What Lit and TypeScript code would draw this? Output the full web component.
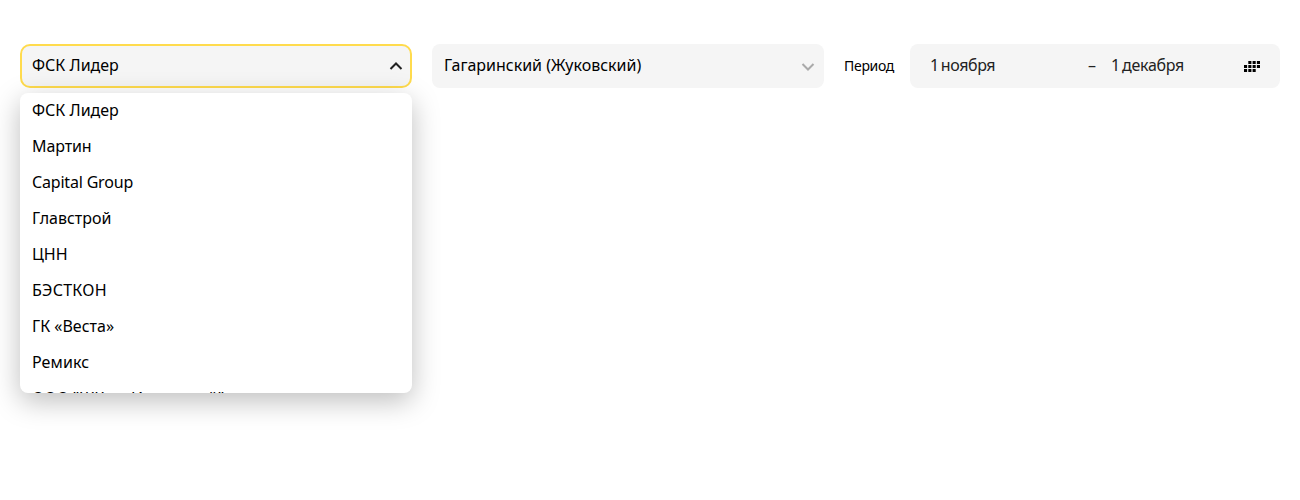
import { LitElement, html, css, svg } from "lit";
import { customElement } from "lit/decorators.js";

const developers = [
  { name: "ФСК Лидер", cls: "leader" },
  { name: "Мартин", cls: "martin" },
  { name: "Capital Group", cls: "capital" },
  { name: "Главстрой", cls: "glav" },
  { name: "ЦНН", cls: "cnn" },
  { name: "БЭСТКОН", cls: "best" },
  { name: "ГК «Веста»", cls: "vesta" },
  { name: "Ремикс", cls: "remix" },
  { name: "ООО \"ЖК на Ильинской\"", cls: "ooo" },
];

const calendarCells = [
  [4.3, 0], [8.6, 0], [12.9, 0],
  [0, 4], [4.3, 4], [8.6, 4], [12.9, 4],
  [0, 8], [4.3, 8], [8.6, 8],
];

@customElement("app-root")
export class AppRoot extends LitElement {
  static styles = css`
    :host {
      display: block;
      height: 500px;
      box-sizing: border-box;
      padding: 44px 20px 0;
      background: #fff;
      color: #000;
      font: 16px/20px "Noto Sans", sans-serif;
      overflow: hidden;
    }
    .filters { display: flex; align-items: center; }
    .select { position: relative; width: 392px; margin-right: 20px; }
    .button {
      display: flex;
      align-items: center;
      justify-content: space-between;
      box-sizing: border-box;
      height: 44px;
      padding: 0 8px 2px 12px;
      border-radius: 8px;
      background: #f5f5f5;
    }
    .open { padding: 0 6px 2px 10px; border: 2px solid #ffdb4d; border-radius: 10px; }
    .chevron { display: block; width: 16px; height: 16px; margin-top: 1px; fill: none; stroke: #222; stroke-width: 2; }
    .muted { stroke: #aaa; }
    .menu {
      position: absolute;
      top: 49px;
      left: 0;
      width: 392px;
      height: 300px;
      border-radius: 8px;
      background: #fff;
      box-shadow: 0 8px 28px rgba(0, 0, 0, 0.26);
      overflow: hidden;
    }
    .item { height: 36px; padding-left: 12px; line-height: 34px; white-space: nowrap; }
    .martin { letter-spacing: -0.1px; }
    .capital { letter-spacing: -0.18px; }
    .best { letter-spacing: 0.25px; }
    .remix { letter-spacing: 0.1px; }
    .ooo { letter-spacing: 0.15px; word-spacing: -0.6px; }
    .label { width: 66px; font-size: 14px; }
    .period { letter-spacing: -0.3px; }
    .range {
      display: flex;
      align-items: center;
      box-sizing: border-box;
      width: 370px;
      height: 44px;
      padding: 0 20px 2px;
      border-radius: 8px;
      background: #f5f5f5;
      color: #222;
    }
    .from, .to { letter-spacing: -0.42px; word-spacing: -1.6px; }
    .from { width: 158px; }
    .dash { width: 23px; }
    .to { flex: 1; letter-spacing: -0.3px; }
    .calendar { display: block; width: 16px; height: 11px; margin-top: 3px; fill: #000; }
  `;

  render() {
    return html`
      <div class="filters">
        <div class="select">
          <div class="button open">
            <span class="leader">ФСК Лидер</span>
            <svg class="chevron" viewBox="0 0 16 16"><path d="M2.5 11 8 5.5 13.5 11" /></svg>
          </div>
          <div class="menu">
            ${developers.map((d) => html`<div class="item"><span class=${d.cls}>${d.name}</span></div>`)}
          </div>
        </div>
        <div class="select">
          <div class="button">
            <span class="complex">Гагаринский (Жуковский)</span>
            <svg class="chevron muted" viewBox="0 0 16 16"><path d="M2.5 6 8 11.5 13.5 6" /></svg>
          </div>
        </div>
        <span class="label"><span class="period">Период</span></span>
        <div class="range">
          <span class="from">1 ноября</span>
          <span class="dash">–</span>
          <span class="to">1 декабря</span>
          <svg class="calendar" viewBox="0 0 16 11">
            ${calendarCells.map(([x, y]) => svg`<rect x=${x} y=${y} width="3.1" height="3" />`)}
          </svg>
        </div>
      </div>
    `;
  }
}
